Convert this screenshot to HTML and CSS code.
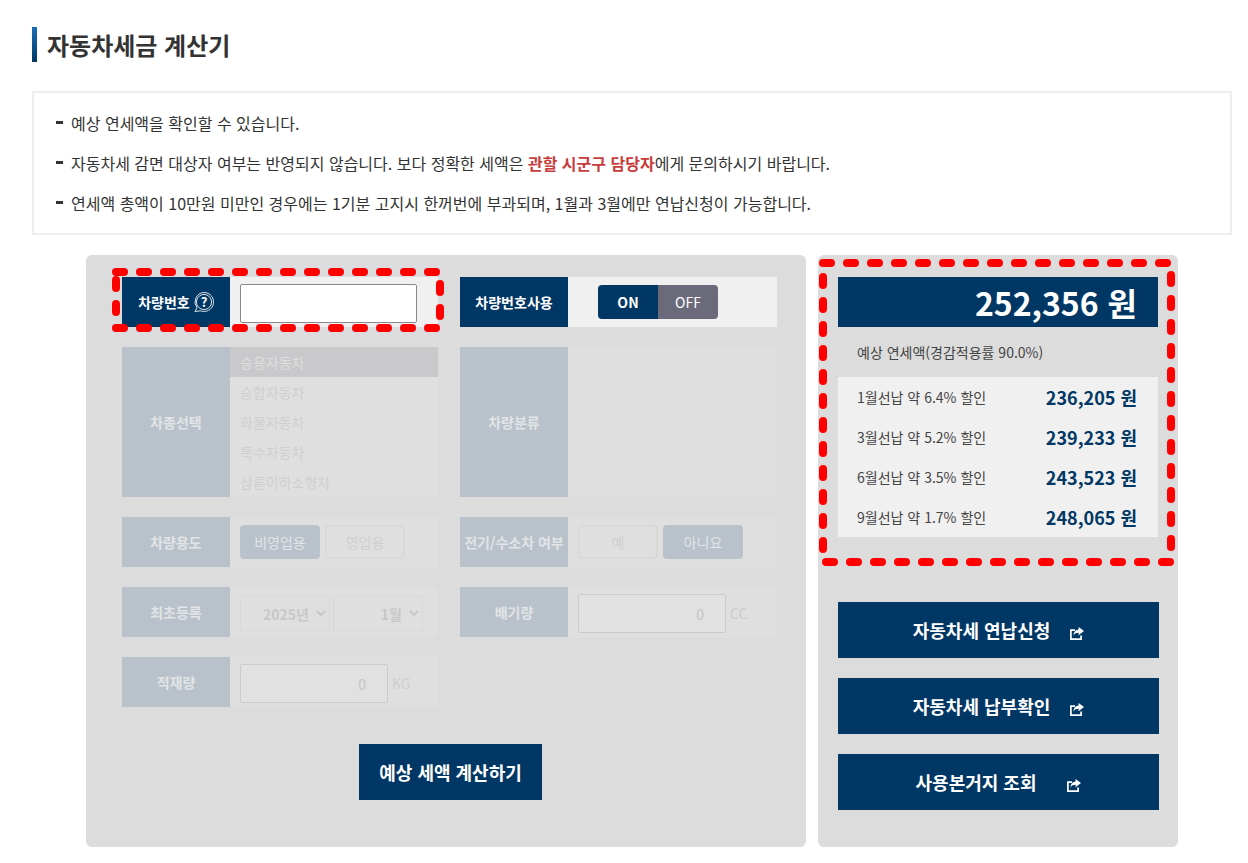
FILE: index.html
```html
<!DOCTYPE html>
<html lang="ko">
<head>
<meta charset="UTF-8" />
<meta name="viewport" content="width=device-width, initial-scale=1" />
<title>자동차세금 계산기</title>
<link rel="stylesheet" href="styles.css">
</head>
<body>

<h1 class="page-title">자동차세금 계산기</h1>

<ul class="notice">
  <li>예상 연세액을 확인할 수 있습니다.</li>
  <li>자동차세 감면 대상자 여부는 반영되지 않습니다. 보다 정확한 세액은 <strong>관할 시군구 담당자</strong>에게 문의하시기 바랍니다.</li>
  <li>연세액 총액이 10만원 미만인 경우에는 1기분 고지시 한꺼번에 부과되며, 1월과 3월에만 연납신청이 가능합니다.</li>
</ul>

<main class="calc">
  <section class="panel form-panel">
    <div class="form-grid">
      <div class="row">
        <div class="row-head">차량번호
          <svg class="help-icon" viewBox="0 0 20 20" aria-hidden="true">
            <path d="M10 .5a9.500 9.500 0 1 1-3.500 18.300L.9 19.500l2.100-3.700A9.500 9.500 0 0 1 10 .5z" />
            <circle cx="10" cy="10" r="7.600" />
            <text x="10" y="14.800" text-anchor="middle">?</text>
          </svg>
        </div>
        <div class="row-body"><input class="text-input" type="text" aria-label="차량번호"></div>
      </div>
      <div class="row">
        <div class="row-head">차량번호사용</div>
        <div class="row-body toggle-body">
          <div class="toggle">
            <span class="toggle-on">ON</span>
            <span class="toggle-off">OFF</span>
          </div>
        </div>
      </div>

      <div class="row row-off">
        <div class="row-head">차종선택</div>
        <ul class="type-list">
          <li class="selected">승용자동차</li>
          <li>승합자동차</li>
          <li>화물자동차</li>
          <li>특수자동차</li>
          <li>삼륜이하소형차</li>
        </ul>
      </div>
      <div class="row row-off">
        <div class="row-head">차량분류</div>
        <div class="row-body"></div>
      </div>

      <div class="row row-off">
        <div class="row-head">차량용도</div>
        <div class="row-body choices">
          <span class="choice selected">비영업용</span>
          <span class="choice">영업용</span>
        </div>
      </div>
      <div class="row row-off">
        <div class="row-head">전기/수소차 여부</div>
        <div class="row-body choices">
          <span class="choice">예</span>
          <span class="choice selected">아니요</span>
        </div>
      </div>

      <div class="row row-off">
        <div class="row-head">최초등록</div>
        <div class="row-body selects">
          <select disabled aria-label="연도"><option>2025년</option></select>
          <select disabled aria-label="월"><option>1월</option></select>
        </div>
      </div>
      <div class="row row-off">
        <div class="row-head">배기량</div>
        <div class="row-body unit-field">
          <input class="num-input" type="text" value="0" disabled aria-label="배기량">
          <span class="unit">CC</span>
        </div>
      </div>

      <div class="row row-off">
        <div class="row-head">적재량</div>
        <div class="row-body unit-field">
          <input class="num-input" type="text" value="0" disabled aria-label="적재량">
          <span class="unit">KG</span>
        </div>
      </div>
    </div>

    <button class="btn calc-btn" type="button">예상 세액 계산하기</button>

    <svg class="marker marker-plate" width="340" height="72" aria-hidden="true">
      <rect x="8" y="8" width="324" height="56" />
    </svg>
  </section>

  <aside class="panel result-panel">
    <div class="total">252,356 원</div>
    <p class="total-label">예상 연세액(경감적용률 90.0%)</p>
    <dl class="discounts">
      <div class="discount"><dt>1월선납 약 6.4% 할인</dt><dd>236,205 원</dd></div>
      <div class="discount"><dt>3월선납 약 5.2% 할인</dt><dd>239,233 원</dd></div>
      <div class="discount"><dt>6월선납 약 3.5% 할인</dt><dd>243,523 원</dd></div>
      <div class="discount"><dt>9월선납 약 1.7% 할인</dt><dd>248,065 원</dd></div>
    </dl>

    <div class="links">
      <a class="btn link-btn" href="#">자동차세 연납신청
        <svg class="share-icon" viewBox="0 0 14 13" aria-hidden="true"><path d="M5 3.200H.9v8.900h10.200V8.400" /><path class="fill" d="M8.600 0 14 4.100 8.600 8.200V5.700C6.200 5.700 4.600 6.300 3.400 8.400 3.600 5.200 5.500 2.800 8.600 2.500z" /></svg>
      </a>
      <a class="btn link-btn" href="#">자동차세 납부확인
        <svg class="share-icon" viewBox="0 0 14 13" aria-hidden="true"><path d="M5 3.200H.9v8.900h10.200V8.400" /><path class="fill" d="M8.600 0 14 4.100 8.600 8.200V5.700C6.200 5.700 4.600 6.300 3.400 8.400 3.600 5.200 5.500 2.800 8.600 2.500z" /></svg>
      </a>
      <a class="btn link-btn link-btn-wide" href="#">사용본거지 조회
        <svg class="share-icon" viewBox="0 0 14 13" aria-hidden="true"><path d="M5 3.200H.9v8.900h10.200V8.400" /><path class="fill" d="M8.600 0 14 4.100 8.600 8.200V5.700C6.200 5.700 4.600 6.300 3.400 8.400 3.600 5.200 5.500 2.800 8.600 2.500z" /></svg>
      </a>
    </div>

    <svg class="marker marker-result" width="364" height="315" aria-hidden="true">
      <rect x="8" y="8" width="348" height="299" />
    </svg>
  </aside>
</main>

</body>
</html>
```

FILE: styles.css
```css
* {
  box-sizing: border-box;
}
body {
  margin: 0;
  padding: 27px 16px 16px 32px;
  font-family: "Noto Sans CJK KR", "Noto Sans", sans-serif;
  background-color: #fff;
  color: #333;
}

.page-title {
  display: flex;
  align-items: center;
  gap: 10px;
  height: 35px;
  margin: 0 0 29px;
  font-size: 24px;
  font-weight: 700;
  line-height: 35px;
  color: #333;
}
.page-title::before {
  content: "";
  width: 5px;
  height: 35px;
  background: linear-gradient(#1b6fb5, #003764);
}

.notice {
  list-style: none;
  margin: 0 0 20px;
  padding: 10px 22px;
  border: 2px solid #eee;
}
.notice li {
  display: flex;
  align-items: center;
  height: 40px;
  font-size: 16px;
  white-space: pre-wrap;
}
.notice li::before {
  content: "";
  flex: none;
  width: 7px;
  height: 3px;
  margin: 0 8px 2px 0;
  background-color: #333;
}
.notice strong {
  font-weight: 700;
  color: #c83c3c;
}

.calc {
  display: flex;
  gap: 12px;
  margin-left: 54px;
}

.panel {
  position: relative;
  height: 592px;
  border-radius: 6px;
  background-color: #dcdcdc;
}
.form-panel {
  width: 720px;
  padding: 22px 29px 0 36px;
}
.result-panel {
  width: 360px;
  padding: 22px 19px 0 20px;
}

.form-grid {
  display: grid;
  grid-template-columns: 316px 317px;
  grid-template-rows: 50px 150px 50px 50px 50px;
  gap: 20px 22px;
}

.row {
  display: flex;
}
.row-head {
  flex: none;
  display: flex;
  align-items: center;
  justify-content: center;
  gap: 4px;
  width: 108px;
  font-size: 14px;
  font-weight: 700;
  color: #fff;
  background-color: #003764;
  white-space: nowrap;
}
.row-body {
  flex: 1;
  display: flex;
  align-items: center;
  padding: 0 10px;
  background-color: #f0f0f0;
}

.help-icon {
  width: 20px;
  height: 20px;
  fill: none;
  stroke: #dbe3ea;
  stroke-width: 1;
}
.help-icon text {
  fill: #fff;
  stroke: none;
  font-size: 13px;
  font-weight: 700;
}

.text-input {
  width: 177px;
  height: 39px;
  margin-top: 3px;
  border: 1px solid #8a8a8a;
  border-radius: 2px;
  background-color: #fff;
}

.toggle-body {
  padding-left: 30px;
}
.toggle {
  display: flex;
  width: 120px;
  height: 34px;
  border-radius: 4px;
  overflow: hidden;
  font-size: 14px;
  line-height: 34px;
  text-align: center;
  color: #fff;
}
.toggle-on {
  flex: 1;
  font-weight: 700;
  background-color: #003764;
}
.toggle-off {
  flex: 1;
  background-color: #6a6a7a;
}

/* disabled rows are washed out */
.row-off .row-head {
  color: #e2e4e6;
  background-color: #b9c2cb;
}
.row-off .row-body,
.type-list {
  background-color: #dfdfdf;
}

.type-list {
  flex: 1;
  list-style: none;
  margin: 0;
  padding: 0;
  font-size: 14px;
  color: #cfcfcf;
}
.type-list li {
  height: 30px;
  padding-left: 10px;
  line-height: 30px;
}
.type-list li.selected {
  color: #dedede;
  background-color: #c9c9cb;
}

.choices {
  gap: 5px;
}
.choice {
  width: 80px;
  height: 34px;
  border: 2px solid #d9d9d9;
  border-radius: 4px;
  font-size: 14px;
  line-height: 30px;
  text-align: center;
  color: #cfcfcf;
}
.choice.selected {
  border-color: #b9c2cb;
  color: #e2e4e6;
  background-color: #b9c2cb;
}

.selects {
  gap: 3px;
}
.selects select {
  width: 90px;
  height: 35px;
  margin-top: 3px;
  padding: 0 4px 0 2px;
  border: 1px solid #d8d8d8;
  border-radius: 0;
  font-family: inherit;
  font-size: 14px;
  font-weight: 700;
  text-align: right;
  text-align-last: right;
  color: #c8c8c8;
  background-color: #dfdfdf;
  opacity: 1;
}

.unit-field {
  gap: 4px;
}
.num-input {
  width: 148px;
  height: 39px;
  margin-top: 3px;
  padding: 0 21px 0 14px;
  border: 1px solid #cbcbcb;
  border-radius: 2px;
  font-family: inherit;
  font-size: 14px;
  text-align: right;
  color: #c4c4c4;
  background-color: #e1e1e1;
}
.unit {
  margin-top: 2px;
  font-size: 14px;
  color: #cdcdcd;
}

.btn {
  display: flex;
  align-items: center;
  justify-content: center;
  height: 56px;
  border: 0;
  font-family: inherit;
  font-size: 18px;
  font-weight: 700;
  text-decoration: none;
  color: #fff;
  background-color: #003764;
}
.calc-btn {
  width: 183px;
  margin: 37px 0 0 237px;
}

.total {
  height: 50px;
  margin-right: 1px;
  padding-right: 21px;
  font-size: 32px;
  font-weight: 700;
  line-height: 50px;
  text-align: right;
  color: #fff;
  background-color: #003764;
}
.total-label {
  height: 50px;
  margin: 0;
  padding-left: 19px;
  font-size: 14px;
  line-height: 50px;
  color: #444;
}

.discounts {
  margin: 0 1px 0 0;
  background-color: #f0f0f0;
}
.discount {
  display: flex;
  align-items: center;
  justify-content: space-between;
  height: 40px;
  padding: 0 21px 0 19px;
}
.discount dt {
  font-size: 14px;
  color: #444;
}
.discount dd {
  margin: 0;
  font-size: 18px;
  font-weight: 700;
  color: #003764;
}

.links {
  display: flex;
  flex-direction: column;
  gap: 20px;
  margin-top: 65px;
}
.link-btn {
  gap: 20px;
}
.link-btn-wide {
  gap: 31px;
}
.share-icon {
  width: 14px;
  height: 13px;
  margin-top: 6px;
  fill: none;
  stroke: #fff;
  stroke-width: 1.7;
}
.share-icon .fill {
  fill: #fff;
  stroke: none;
}

/* red dashed call-outs over the panels */
.marker {
  position: absolute;
  fill: none;
  stroke: #f00;
  stroke-width: 8;
  stroke-linecap: round;
  stroke-dasharray: 8 16;
  pointer-events: none;
}
.marker-plate {
  left: 22px;
  top: 9px;
}
.marker-result {
  left: -3px;
  top: 0;
}
```
